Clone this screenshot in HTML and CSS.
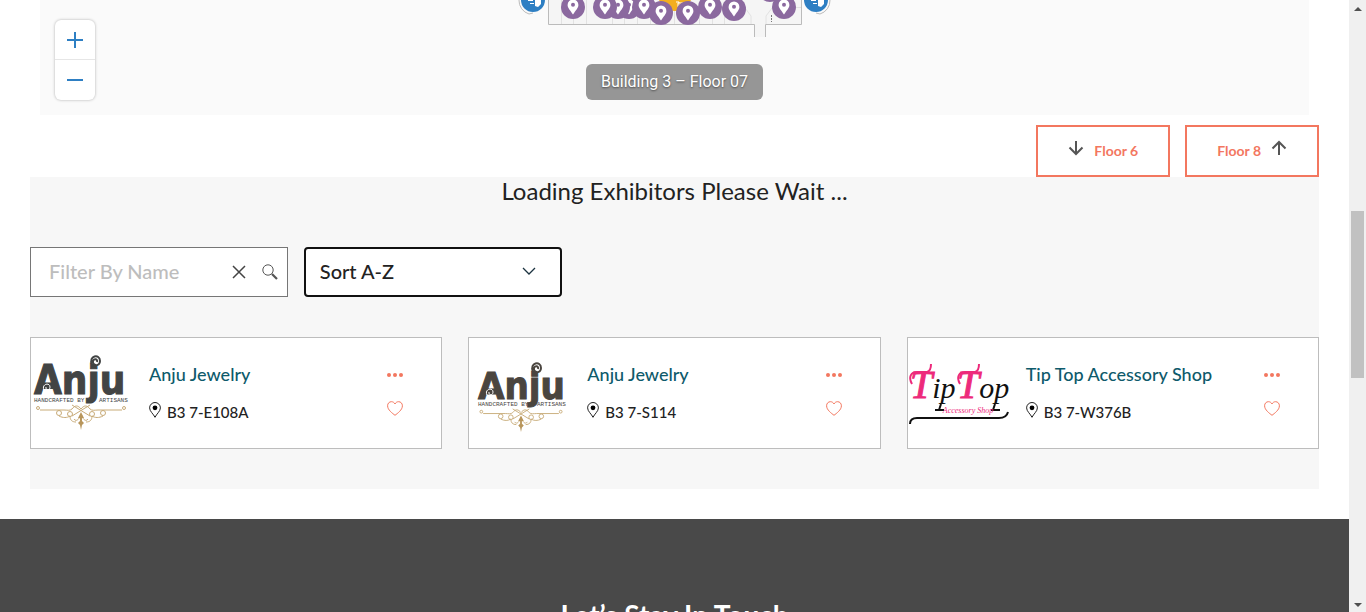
FILE: index.html
```html
<!DOCTYPE html>
<html lang="en">
<head>
<meta charset="utf-8">
<title>Exhibitors – Floor 07</title>
<link rel="stylesheet" href="styles.css">
</head>
<body>
<svg class="defs" aria-hidden="true">
  <defs>
    <symbol id="pin" viewBox="0 0 24 24">
      <circle cx="12" cy="12" r="12" fill="#8b699f"/>
      <path d="M12 19.500C9.500 15.500 6.600 13 6.600 9.900a5.400 5.400 0 0 1 10.800 0C17.400 13 14.500 15.500 12 19.500z" fill="#fff"/>
      <circle cx="12" cy="9.800" r="2" fill="#8b699f"/>
    </symbol>
    <symbol id="marker" viewBox="0 0 12 16">
      <path d="M6 15.300C4.500 12 .6 9.300.6 5.900a5.400 5.400 0 0 1 10.800 0C11.400 9.300 7.500 12 6 15.300z" fill="#fff" stroke="#222" stroke-width="1"/>
      <circle cx="6" cy="5.800" r="2.400" fill="#000"/>
    </symbol>
    <symbol id="dots" viewBox="0 0 16 4">
      <circle cx="2" cy="2" r="2"/><circle cx="8" cy="2" r="2"/><circle cx="14" cy="2" r="2"/>
    </symbol>
    <symbol id="heart" viewBox="0 0 16 15">
      <path d="M8 14.300C5.500 12.300.6 9 .6 4.800.6 2.300 2.300.7 4.400.7 6.100.7 7.300 1.600 8 3 8.700 1.600 9.900.7 11.600.7c2.100 0 3.800 1.600 3.800 4.100 0 4.200-4.900 7.500-7.400 9.500z" fill="none" stroke="#f3775f" stroke-width="1"/>
    </symbol>
    <symbol id="ornament" viewBox="0 0 94 26">
      <g fill="none" stroke="#c8ab78" stroke-width="1">
        <path d="M47 5c-3-4-6-4-9 0-2 2-5 1-8 1H6M47 5c3-4 6-4 9 0 2 2 5 1 8 1h24M38 1l18 11M56 1L38 12"/>
        <circle cx="4" cy="4" r="1.500"/><circle cx="90" cy="4" r="1.500"/>
        <circle cx="25" cy="9" r="2.500"/><circle cx="69" cy="9" r="2.500"/>
        <circle cx="36" cy="10" r="2.500"/><circle cx="58" cy="10" r="2.500"/>
        <path d="M25 12c4 2 8 2 11 0 0 4 2 6 6 6M69 12c-4 2-8 2-11 0 0 4-2 6-6 6M40 15c2 3 5 1 7-5 2 6 5 8 7 5"/>
      </g>
      <path d="M47 8l3 6h-2v3l2 2-2 2-1 5-1-5-2-2 2-2v-3h-2z" fill="#b8965c"/>
    </symbol>
  </defs>
</svg>
<div class="window">
  <div class="page">
    <section class="map" aria-label="Floor map">
      <svg class="plan" width="330" height="40" viewBox="510 0 330 40" aria-hidden="true">
        <path d="M548 0h254v24H766v13h-12V24H548z" fill="#f5f5f5"/>
        <path d="M548.500 0V24.500H754.500V37M765.500 37V24.500H801.500V0" fill="none" stroke="#bbb"/>
        <path d="M561.500 0v24M573.500 12v12M586.500 0v24M612.500 12v12M624.500 12v12M637.500 12v12M650.500 12v12M674.500 0v24M699.500 12v12M712.500 12v12M724.500 12v12M745 8l6 8v8M772 8l-6 8v8M788 7.500h13" fill="none" stroke="#e2e2e2"/>
        <path d="M771.500 15v7" stroke="#777" stroke-dasharray="2 1"/>
        <path d="M519 0a14 14 0 0 0 10 14l4-1M830 0a14 14 0 0 1-10 14l-4-1" fill="none" stroke="#bbb"/>
        <g fill="#2e7fc3"><circle cx="533" cy="0" r="12"/><circle cx="816" cy="0" r="12"/></g>
        <g fill="#fff"><path d="M535 0h6v4l-3 3-3-1zM528 0h5v1h-5zM530 3h4v1h-4z"/><path d="M818 0h6v4l-3 3-3-1zM811 0h5v1h-5zM813 3h4v1h-4z"/></g>
        <use href="#pin" x="561" y="-5" width="24" height="24"/>
        <use href="#pin" x="617" y="-5" width="24" height="24"/>
        <use href="#pin" x="606" y="-5" width="24" height="24"/>
        <use href="#pin" x="593" y="-5" width="24" height="24"/>
        <use href="#pin" x="632" y="-5" width="24" height="24"/>
        <circle cx="675" cy="-6" r="17" fill="#f3ae1f"/>
        <path d="M676 2h3v1h-1v4M680 2v5M682 2v3" fill="none" stroke="#fff"/>
        <use href="#pin" x="649" y="1" width="24" height="24"/>
        <use href="#pin" x="676" y="1" width="24" height="24"/>
        <use href="#pin" x="698" y="-5" width="24" height="24"/>
        <use href="#pin" x="722" y="-3" width="24" height="24"/>
        <circle cx="770" cy="-10" r="12" fill="#8b699f"/>
        <use href="#pin" x="772" y="-5" width="24" height="24"/>
      </svg>
      <p class="floor-label">Building 3 – Floor 07</p>
      <div class="zoom">
        <button class="zoom-button" type="button" aria-label="Zoom in"><svg width="16" height="16" viewBox="0 0 16 16"><path d="M8 0v16M0 8h16" stroke="#2e7fc3" stroke-width="2"/></svg></button>
        <button class="zoom-button" type="button" aria-label="Zoom out"><svg width="16" height="16" viewBox="0 0 16 16"><path d="M0 8h16" stroke="#2e7fc3" stroke-width="2"/></svg></button>
      </div>
    </section>

    <nav class="floors" aria-label="Floors">
      <a class="floor-link" href="#floor-6"><svg width="16" height="16" viewBox="0 0 16 16"><path d="M8 1v13M1.500 7.500L8 14l6.500-6.500" fill="none" stroke="#555" stroke-width="2"/></svg><span>Floor 6</span></a>
      <a class="floor-link" href="#floor-8"><span>Floor 8</span><svg width="16" height="16" viewBox="0 0 16 16"><path d="M8 15V2M1.500 8.500L8 2l6.500 6.500" fill="none" stroke="#555" stroke-width="2"/></svg></a>
    </nav>

    <main class="exhibitors">
      <h2 class="status">Loading Exhibitors Please Wait ...</h2>
      <form class="filters">
        <div class="search">
          <input class="search-input" type="text" placeholder="Filter By Name" aria-label="Filter By Name">
          <button class="icon-button" type="button" aria-label="Clear"><svg width="14" height="14" viewBox="0 0 14 14"><path d="M1 1l12 12M13 1L1 13" stroke="#444" stroke-width="1.500"/></svg></button>
          <button class="icon-button" type="submit" aria-label="Search"><svg width="16" height="16" viewBox="0 0 16 16"><circle cx="6" cy="6" r="5.200" fill="none" stroke="#555" stroke-width="1"/><path d="M10 10l5 5" stroke="#555" stroke-width="2.200"/></svg></button>
        </div>
        <div class="sort">
          <select class="sort-select" aria-label="Sort"><option>Sort A-Z</option><option>Sort Z-A</option></select>
          <svg class="chevron" width="14" height="8" viewBox="0 0 14 8" aria-hidden="true"><path d="M1 1l6 6 6-6" fill="none" stroke="#1c3340" stroke-width="1.300"/></svg>
        </div>
      </form>

      <div class="cards">
        <article class="card">
          <svg class="logo" width="100" height="84" viewBox="0 0 100 84" role="img" aria-label="Anju">
            <g class="anju-grey">
              <text class="anju" x="3" y="43">Anju</text>
              <text class="tagline" x="3" y="51">HANDCRAFTED BY</text>
              <text class="tagline" x="68" y="51">ARTISANS</text>
              <path d="M61 13c-4-8 8-11 8-3 0 6-8 5-7 0 1-3 5-2 4 1" class="curl-dark"/>
            </g>
            <path d="M13 39c-3-6 6-8 6-3 0 4-5 3-4 0" class="curl-light"/>
            <use href="#ornament" x="3" y="53" width="94" height="26"/>
          </svg>
          <div class="details">
            <a class="name" href="#anju-e108a">Anju Jewelry</a>
            <p class="booth"><svg width="12" height="16" aria-hidden="true"><use href="#marker"/></svg>B3 7-E108A</p>
          </div>
          <div class="actions">
            <button class="icon-button" type="button" aria-label="More"><svg width="16" height="4" fill="#f3775f"><use href="#dots"/></svg></button>
            <button class="icon-button" type="button" aria-label="Favorite"><svg width="16" height="15"><use href="#heart"/></svg></button>
          </div>
        </article>
        <article class="card">
          <svg class="logo" width="100" height="84" viewBox="0 0 100 84" role="img" aria-label="Anju">
            <g class="anju-brown">
              <text class="anju anju-small" x="9" y="48">Anju</text>
              <text class="tagline" x="9" y="55">HANDCRAFTED BY</text>
              <text class="tagline" x="68" y="55">ARTISANS</text>
              <path d="M64 20c-4-8 8-11 8-3 0 6-8 5-7 0 1-3 5-2 4 1" class="curl-dark"/>
            </g>
            <path d="M18 44c-3-6 6-8 6-3 0 4-5 3-4 0" class="curl-light"/>
            <use href="#ornament" x="8" y="57" width="88" height="24"/>
          </svg>
          <div class="details">
            <a class="name" href="#anju-s114">Anju Jewelry</a>
            <p class="booth"><svg width="12" height="16" aria-hidden="true"><use href="#marker"/></svg>B3 7-S114</p>
          </div>
          <div class="actions">
            <button class="icon-button" type="button" aria-label="More"><svg width="16" height="4" fill="#f3775f"><use href="#dots"/></svg></button>
            <button class="icon-button" type="button" aria-label="Favorite"><svg width="16" height="15"><use href="#heart"/></svg></button>
          </div>
        </article>
        <article class="card">
          <svg class="logo" width="100" height="84" viewBox="0 0 100 84" role="img" aria-label="Tip Top Accessory Shop">
            <text class="tiptop" x="2" y="47"><tspan class="big-letter">T</tspan>ip</text>
            <text class="tiptop" x="49" y="47"><tspan class="big-letter">T</tspan>op</text>
            <path d="M4 33c-4-7-1-12 5-12h10q4-1 4-8M52 33c-4-7-1-12 5-12h10q4-1 4-8" fill="none" stroke="#ed2a7b" stroke-width="2"/>
            <path d="M33 53l-2 6M27 59h9M87 53l-2 6M83 59h9" fill="none" stroke="#111" stroke-width="2"/>
            <text class="shop" x="60" y="62">Accessory Shop</text>
            <path d="M2 73c0-4 3-6 7-6h82c5 0 8-2 9-6" fill="none" stroke="#111" stroke-width="2"/>
          </svg>
          <div class="details">
            <a class="name" href="#tip-top">Tip Top Accessory Shop</a>
            <p class="booth"><svg width="12" height="16" aria-hidden="true"><use href="#marker"/></svg>B3 7-W376B</p>
          </div>
          <div class="actions">
            <button class="icon-button" type="button" aria-label="More"><svg width="16" height="4" fill="#f3775f"><use href="#dots"/></svg></button>
            <button class="icon-button" type="button" aria-label="Favorite"><svg width="16" height="15"><use href="#heart"/></svg></button>
          </div>
        </article>
      </div>
    </main>

    <footer class="footer"><h2 class="footer-title">Let’s Stay In Touch</h2></footer>
  </div>
  <div class="scrollbar" aria-hidden="true">
    <svg width="8" height="4" viewBox="0 0 8 4"><path d="M0 4l4-4 4 4z" fill="#505050"/></svg>
    <div class="track"><div class="thumb"></div></div>
    <svg width="8" height="4" viewBox="0 0 8 4"><path d="M0 0l4 4 4-4z" fill="#505050"/></svg>
  </div>
</div>
</body>
</html>
```
FILE: styles.css
```css
* { box-sizing: border-box; }

body {
  margin: 0;
  overflow: hidden;
  background: #fff;
  color: #222;
  font-family: Lato, "Liberation Sans", sans-serif;
  font-size: 16px;
}

h2, p { margin: 0; }
a { text-decoration: none; }
svg { display: block; flex: none; }
button { border: 0; padding: 0; background: none; cursor: pointer; }

.defs { position: absolute; width: 0; height: 0; }
.window { display: flex; height: 100vh; }
.page { flex: 1; min-width: 0; overflow: hidden; display: flex; flex-direction: column; }
.page > * { flex: none; }

/* Map */
.map {
  position: relative;
  display: flex;
  flex-direction: column;
  align-items: center;
  gap: 24px;
  margin: 0 40px;
  padding-bottom: 15px;
  background: #fafafa;
}
.floor-label {
  padding: 6px 15px;
  border-radius: 6px;
  background: #969696;
  color: #fff;
  font-family: Roboto, sans-serif;
  font-size: 16px;
  line-height: 24px;
  text-shadow: 0 1px 2px rgba(0, 0, 0, .5);
}
.zoom {
  position: absolute;
  left: 15px;
  top: 20px;
  width: 40px;
  border-radius: 6px;
  background: #fff;
  box-shadow: 0 0 3px rgba(0, 0, 0, .3);
}
.zoom-button { display: grid; place-items: center; width: 100%; height: 40px; }
.zoom-button:first-child { border-bottom: 1px solid #e6e6e6; }

/* Floor navigation */
.floors { display: flex; justify-content: flex-end; gap: 15px; padding: 10px 30px 0; }
.floor-link {
  display: flex;
  align-items: center;
  gap: 10px;
  padding: 0 30px 2px;
  height: 52px;
  border: 2px solid #f3775f;
  color: #f3775f;
  font-size: 14px;
  font-weight: 700;
}
.floor-link svg { margin-bottom: 4px; }

/* Exhibitor list */
.exhibitors { margin: 0 30px 30px; padding-bottom: 40px; background: #f7f7f7; }
.status { font-size: 24px; font-weight: 400; line-height: 28px; text-align: center; }
.filters { display: flex; gap: 16px; margin: 42px 0 40px; }
.search, .sort { position: relative; width: 20%; height: 50px; background: #fff; }
.search {
  display: flex;
  align-items: center;
  gap: 16px;
  padding: 0 9px 0 18px;
  border: 1px solid #767676;
}
.search-input {
  flex: 1;
  min-width: 0;
  padding: 0 0 2px;
  border: 0;
  outline: 0;
  background: none;
  font: 500 20px Lato, sans-serif;
}
.search-input::placeholder { color: #bdbdbd; }
.sort-select {
  width: 100%;
  height: 100%;
  padding: 0 14px 2px;
  border: 2px solid #111;
  border-radius: 4px;
  appearance: none;
  background: #fff;
  color: #222;
  font: 500 20px Lato, sans-serif;
}
.chevron { position: absolute; right: 26px; top: 20px; pointer-events: none; }

.cards { display: grid; grid-template-columns: repeat(3, 1fr); gap: 26px; }
.card {
  display: flex;
  align-items: center;
  gap: 18px;
  padding: 13px 38px 13px 0;
  border: 1px solid #bdbdbd;
  background: #fff;
}
.logo { overflow: visible; }
.details { display: grid; gap: 14px; flex: 1; line-height: 24px; }
.name { color: #0e5a6b; font-size: 18px; font-weight: 500; }
.booth { display: flex; align-items: center; gap: 6px; font-size: 15px; font-weight: 500; }
.booth svg { margin-bottom: 4px; }
.actions { display: grid; justify-items: center; gap: 24px; padding-top: 2px; }

/* Exhibitor logos */
.anju { font: 700 40px "DejaVu Sans Condensed", "DejaVu Sans", sans-serif; }
.anju-small { font-size: 38px; }
.anju-grey { fill: #424444; stroke: #424444; }
.anju-brown { fill: #4a453f; stroke: #4a453f; }
.tagline { font: 6px "Liberation Mono", monospace; stroke: none; }
.curl-dark { fill: #fff; stroke-width: 2; }
.curl-light { fill: none; stroke: #fff; stroke-width: 1; }
.tiptop { font: italic 30px "Liberation Serif", serif; fill: #111; }
.big-letter { font-size: 40px; fill: #ed2a7b; stroke: #ed2a7b; }
.shop { font: italic 8px "Liberation Serif", serif; fill: #ed2a7b; text-anchor: middle; }

/* Footer */
.footer { padding: 78px 30px; background: #494949; color: #fff; text-align: center; }
.footer-title { font-size: 28px; font-weight: 700; line-height: 36px; }

/* Scrollbar */
.scrollbar {
  display: flex;
  flex-direction: column;
  align-items: center;
  width: 17px;
  padding: 7px 0 5px;
  background: #f0f0f0;
}
.track { flex: 1; width: 13px; padding-top: 200px; }
.thumb { height: 167px; background: #c1c1c1; }
```
